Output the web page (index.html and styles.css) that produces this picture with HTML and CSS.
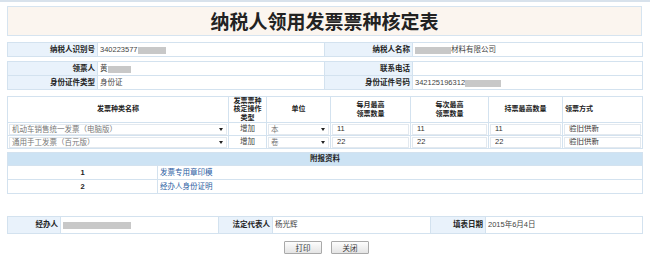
FILE: index.html
```html
<!DOCTYPE html>
<html lang="zh-CN">
<head>
  <meta charset="UTF-8" />
  <title>纳税人领用发票票种核定表</title>
  <link rel="stylesheet" href="styles.css">
</head>
<body>
  <div class="page">
    <div class="title">纳税人领用发票票种核定表</div>

    <table class="grid info">
      <colgroup><col class="c-lab"><col class="c-val"><col class="c-lab2"><col class="c-val2"></colgroup>
      <tr>
        <td class="lab">纳税人识别号</td>
        <td class="val">340223577<span class="mask w28"></span></td>
        <td class="lab">纳税人名称</td>
        <td class="val"><span class="mask w36"></span>材料有限公司</td>
      </tr>
    </table>

    <table class="grid info gap4">
      <colgroup><col class="c-lab"><col class="c-val"><col class="c-lab2"><col class="c-val2"></colgroup>
      <tr>
        <td class="lab">领票人</td>
        <td class="val">黄<span class="mask w23"></span></td>
        <td class="lab">联系电话</td>
        <td class="val"></td>
      </tr>
      <tr>
        <td class="lab">身份证件类型</td>
        <td class="val">身份证</td>
        <td class="lab">身份证件号码</td>
        <td class="val">342125196312<span class="mask w36"></span></td>
      </tr>
    </table>

    <table class="grid kinds">
      <colgroup>
        <col class="k1"><col class="k2"><col class="k3"><col class="k4"><col class="k5"><col class="k6"><col class="k7">
      </colgroup>
      <tr class="head">
        <th>发票种类名称</th>
        <th class="narrow">发票票种核定操作类型</th>
        <th>单位</th>
        <th>每月最高<br>领票数量</th>
        <th>每次最高<br>领票数量</th>
        <th>持票最高数量</th>
        <th class="left">领票方式</th>
      </tr>
      <tr>
        <td><div class="pick"><select><option>机动车销售统一发票（电脑版）</option></select></div></td>
        <td class="center">增加</td>
        <td><div class="pick"><select><option>本</option></select></div></td>
        <td><input class="field" value="11"></td>
        <td><input class="field" value="11"></td>
        <td><input class="field" value="11"></td>
        <td><input class="field" value="验旧供新"></td>
      </tr>
      <tr>
        <td><div class="pick"><select><option>通用手工发票（百元版）</option></select></div></td>
        <td class="center">增加</td>
        <td><div class="pick"><select><option>卷</option></select></div></td>
        <td><input class="field" value="22"></td>
        <td><input class="field" value="22"></td>
        <td><input class="field" value="22"></td>
        <td><input class="field" value="验旧供新"></td>
      </tr>
    </table>

    <table class="grid attach">
      <colgroup><col class="a1"><col class="a2"></colgroup>
      <tr><th colspan="2">附报资料</th></tr>
      <tr><td class="num">1</td><td><a href="#">发票专用章印模</a></td></tr>
      <tr><td class="num">2</td><td><a href="#">经办人身份证明</a></td></tr>
    </table>

    <table class="grid sign">
      <colgroup>
        <col class="s1"><col class="s2"><col class="s3"><col class="s4"><col class="s5"><col class="s6">
      </colgroup>
      <tr>
        <td class="lab">经办人</td>
        <td class="val"><span class="mask w68"></span></td>
        <td class="lab">法定代表人</td>
        <td class="val">杨光辉</td>
        <td class="lab">填表日期</td>
        <td class="val">2015年6月4日</td>
      </tr>
    </table>

    <div class="actions">
      <button>打印</button>
      <button>关闭</button>
    </div>
  </div>
</body>
</html>
```

FILE: styles.css
```css
body {
  margin: 0;
  border-top: 2px solid #d8e2ec;
  background: #fff;
  font-family: "Liberation Sans", "Noto Sans CJK SC", sans-serif;
  font-size: 7.5px;
  color: #444;
}
.page {
  width: 635px;
  margin-left: 7px;
  padding-top: 4px;
}
.title {
  height: 28px;
  line-height: 28px;
  border: 1px solid #d6e4f0;
  background: #fbf5ef;
  text-align: center;
  font-family: "Noto Sans CJK SC", sans-serif;
  font-size: 19px;
  font-weight: bold;
  color: #222;
}
.grid {
  width: 635px;
  table-layout: fixed;
  border-collapse: collapse;
  margin-top: 6px;
}
.grid td, .grid th {
  border: 1px solid #d3e2ef;
  padding: 0 2px;
  line-height: 13px;
  white-space: nowrap;
  overflow: hidden;
}
.gap4 { margin-top: 4px; }
.c-lab { width: 90px; }
.c-val { width: 227px; }
.c-lab2 { width: 88px; }
.c-val2 { width: 230px; }
.lab {
  background: #e9f2fb;
  text-align: right;
  font-weight: bold;
  color: #222;
}
.val { background: #fff; }
.mask {
  display: inline-block;
  height: 7px;
  background: #c8c8c8;
  vertical-align: middle;
}
.w23 { width: 23px; }
.w28 { width: 28px; }
.w36 { width: 36px; }
.w68 { width: 68px; }

/* invoice kinds */
.kinds .k1 { width: 221px; }
.kinds .k2 { width: 38px; }
.kinds .k3 { width: 64px; }
.kinds .k4 { width: 80px; }
.kinds .k5 { width: 78px; }
.kinds .k6 { width: 74px; }
.kinds .k7 { width: 80px; }
.kinds .head th {
  height: 25px;
  font-size: 7px;
  line-height: 8.3px;
  font-weight: bold;
  color: #222;
  background: #fff;
  white-space: normal;
}
.kinds .head .narrow { padding: 0 3px; }
.kinds .head .left { text-align: left; }
.kinds td {
  line-height: 12px;
  padding: 0 1px;
  background: #fff;
}
.center { text-align: center; }
.pick {
  position: relative;
  height: 11px;
}
.pick select {
  appearance: none;
  -webkit-appearance: none;
  width: 100%;
  height: 11px;
  border: 1px solid #e3e9ef;
  background: #fff;
  padding: 0 2px;
  font: inherit;
  line-height: 9px;
  color: #777;
}
.pick::after {
  content: "";
  position: absolute;
  right: 4px;
  top: 4px;
  border-left: 2px solid transparent;
  border-right: 2px solid transparent;
  border-top: 3px solid #222;
}
.field {
  box-sizing: border-box;
  width: 100%;
  height: 11px;
  border: 1px solid #e3e9ef;
  padding: 0 4px;
  font: inherit;
  color: #333;
  background: #fff;
}

/* attachments */
.attach { margin-top: 3px; }
.attach .a1 { width: 150px; }
.attach .a2 { width: 485px; }
.attach th {
  background: #cde3f4;
  font-weight: bold;
  color: #222;
  line-height: 12px;
}
.attach .num {
  text-align: center;
  font-weight: bold;
  color: #222;
}
.attach a {
  color: #2a5c9f;
  text-decoration: none;
}

/* signature row */
.sign { margin-top: 22px; }
.sign td { line-height: 16px; }
.sign .s1 { width: 53px; }
.sign .s2 { width: 158px; }
.sign .s3 { width: 54px; }
.sign .s4 { width: 158px; }
.sign .s5 { width: 55px; }
.sign .s6 { width: 157px; }

.actions {
  display: flex;
  justify-content: center;
  gap: 9px;
  margin-top: 7px;
  padding-left: 4px;
}
.actions button {
  width: 38px;
  height: 13px;
  padding: 0;
  border: 1px solid #a9a9a9;
  border-radius: 1px;
  background: linear-gradient(#fdfdfd, #e4e4e4);
  font: inherit;
  color: #333;
  cursor: pointer;
}
```
